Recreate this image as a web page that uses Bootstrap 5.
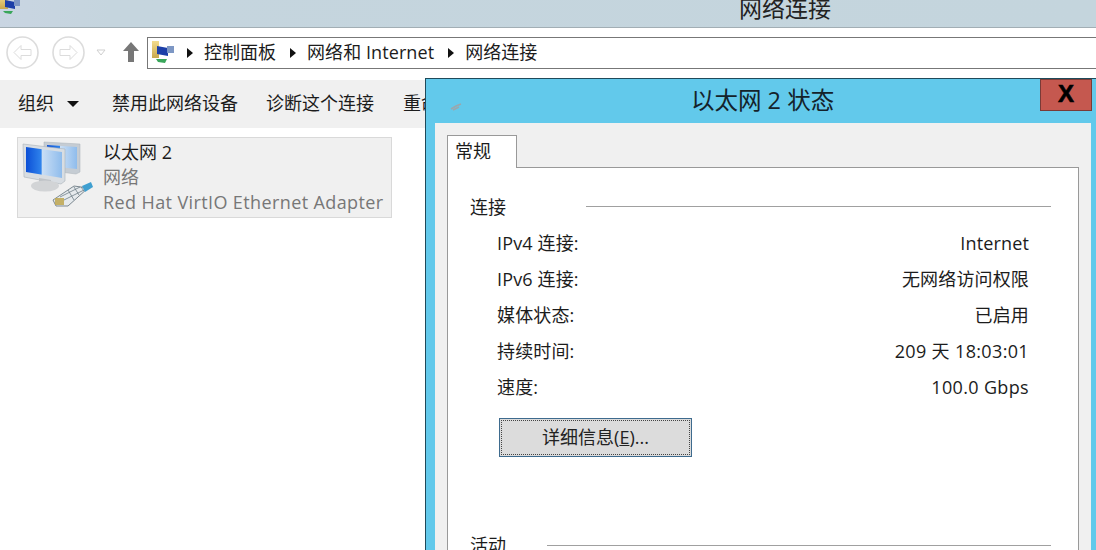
<!DOCTYPE html>
<html lang="zh-CN">
<head>
<meta charset="utf-8">
<title>网络连接</title>
<link href="https://cdn.jsdelivr.net/npm/bootstrap@5.3.0/dist/css/bootstrap.min.css" rel="stylesheet">
<style>
html,body{height:550px;overflow:hidden;background:#fff}
body{font-family:"Open Sans","Noto Sans CJK SC",sans-serif;font-size:18px;line-height:24px;color:#1c1c1c;width:1096px;position:relative}
.title-strip{height:28px;background:linear-gradient(90deg,#c9d5e2 0,#c5d5de 110px,#c4d5dd 100%);border-bottom:1px solid #a2aeb4;overflow:hidden}
.title-strip .app-ico{width:22px;height:22px;margin-top:-6px;flex:none}
.title-text{font-size:23px;line-height:17px;margin-left:717px;color:#222}
.addr-row{height:52px;padding:0 0 4px 6px}
.round-btn{width:33px;height:33px;flex:none}
.fwd-btn{margin-left:13px}
.hist-caret{margin-left:11px;flex:none}
.up-arrow{margin-left:16px;flex:none}
.addr-box{height:32px;flex:1;border:1px solid #777;border-right:0;margin-left:7px;padding:0 0 1px 3px;margin-top:1px;white-space:nowrap}
.crumb-sep{width:0;height:0;border-left:6px solid #111;border-top:5px solid transparent;border-bottom:5px solid transparent;margin:2px 11px 0 14px;flex:none}
.crumb-first{margin-left:12px}
.crumb-wide{letter-spacing:.08px}
.cmd-bar{height:48px;background:#f0f0f0;padding:0 0 2px 18px;white-space:nowrap;overflow:hidden}
.cmd-caret{width:0;height:0;border-top:6px solid #111;border-left:6px solid transparent;border-right:6px solid transparent;margin:1px 0 0 13px}
.cmd-a{margin-left:33px}
.cmd-b{margin-left:28px}
.cmd-c{margin-left:29px}
.adapter-tile{width:375px;height:81px;margin:9px 0 0 17px;background:#f0f0f0;border:1px solid #d9d9d9;padding:2px 0 0 85px;position:relative}
.adapter-tile .tile-ico{position:absolute;left:4px;top:2px;width:72px;height:72px}
.adapter-tile .ln{height:25px;line-height:25px;white-space:nowrap}
.muted-ln{color:#777}
.wide-ln{letter-spacing:.39px}
.dlg{position:absolute;left:425px;top:78px;width:680px;height:480px;background:#62c9eb;border:1px solid #1f4a5a;border-right:0;border-bottom:0}
.dlg-head{height:44px;position:relative}
.dlg-title{font-size:23.5px;line-height:42px;padding-left:265px;color:#14222a;white-space:nowrap}
.dlg-small{position:absolute;left:24px;top:24px;width:12px;height:8px}
.close-x{position:absolute;left:614px;top:0;width:52px;height:32px;background:#c5584f;border:1px solid #7a3a36;color:#000;font:700 24px/28px "Liberation Sans",sans-serif;text-align:center;-webkit-text-stroke:.6px #000}
.dlg-body{margin-left:9px;background:#f0f0f0;width:656px;height:440px;padding:12px 0 0 12px}
.tab-head{width:70px;height:33px;background:#fff;border:1px solid #999;border-bottom:0;padding:3px 0 0 7px;position:relative;z-index:1;margin-bottom:-1px}
.tab-pane-box{width:632px;height:400px;background:#fff;border:1px solid #999;padding:27px 27px 0 22px}
.grp-head{height:24px}
.grp-line{flex:1;height:1px;background:#a0a0a0;margin-left:41px}
.grp-line.wide{margin-left:80px;margin-top:-1px}
.info-list{padding:12px 22px 0 27px}
.info-row{height:36px;line-height:24px;white-space:nowrap;letter-spacing:.15px}
.val-wide{letter-spacing:.35px}
.detail-btn{width:193px;height:39px;margin:7px 0 0 2px;background:#dcdcdc;border:1px solid #3e6b8e;outline:1px dotted #444;outline-offset:-3px;border-radius:0;padding:0;font-size:18px;color:#222;display:block}
.gap-block{height:76px}
</style>
</head>
<body>
<svg width="0" height="0" class="position-absolute">
  <defs>
    <linearGradient id="scr" x1="0" y1="0" x2="1" y2="0"><stop offset="0" stop-color="#0c4fd6"/><stop offset=".42" stop-color="#2f83ec"/><stop offset=".45" stop-color="#c9def5"/><stop offset="1" stop-color="#8fbcec"/></linearGradient>
    <linearGradient id="fold" x1="0" y1="0" x2="0" y2="1"><stop offset="0" stop-color="#f3dc8e"/><stop offset="1" stop-color="#c9a84e"/></linearGradient>
  </defs>
</svg>
<div class="title-strip d-flex">
  <svg class="app-ico" viewBox="0 0 22 22"><rect x="0" y="1" width="8" height="14" fill="url(#fold)"/><path d="M5 6 L15 8 V15 L5 13 Z" fill="#1c3fa8"/><rect x="14" y="6" width="6" height="6" fill="#7d97c4"/><path d="M3 17 L13 17 L11 20 L5 19 Z" fill="#39a65a"/></svg>
  <div class="title-text flex-grow-1">网络连接</div>
</div>
<div class="addr-row d-flex align-items-center">
  <svg class="round-btn" viewBox="0 0 33 33" fill="none" stroke="#dcdcdc"><circle cx="16.500" cy="16.500" r="15.500" stroke-width="1.600"/><path d="M8 16.500 L15 9.500 V13.500 H25 V19.500 H15 V23.500 Z" stroke-width="1"/></svg>
  <svg class="round-btn fwd-btn" viewBox="0 0 33 33" fill="none" stroke="#dcdcdc"><circle cx="16.500" cy="16.500" r="15.500" stroke-width="1.600"/><path d="M25 16.500 L18 9.500 V13.500 H8 V19.500 H18 V23.500 Z" stroke-width="1"/></svg>
  <svg width="10" height="7" class="hist-caret" viewBox="0 0 10 7" fill="none" stroke="#cfcfcf"><path d="M1 1 H9 L5 6 Z"/></svg>
  <svg width="18" height="22" class="up-arrow" viewBox="0 0 18 22"><path d="M9 1 L17 10 H12 V21 H6 V10 H1 Z" fill="#777"/></svg>
  <div class="addr-box d-flex align-items-center">
    <svg width="24" height="25" viewBox="0 0 24 25"><rect x="1" y="1" width="7" height="17" fill="url(#fold)"/><path d="M6 6 L17 8 V16 L6 14 Z" fill="#1c3fa8"/><rect x="16" y="6" width="7" height="7" fill="#7d97c4"/><path d="M5 19 L16 19 L14 23 L7 22 Z" fill="#39a65a"/></svg>
    <span class="crumb-sep crumb-first"></span><span>控制面板</span>
    <span class="crumb-sep"></span><span class="crumb-wide">网络和 Internet</span>
    <span class="crumb-sep"></span><span>网络连接</span>
  </div>
</div>
<div class="cmd-bar d-flex align-items-center">
  <span>组织</span><span class="cmd-caret"></span>
  <span class="cmd-a">禁用此网络设备</span>
  <span class="cmd-b">诊断这个连接</span>
  <span class="cmd-c">重命名此连接</span>
</div>
<div class="adapter-tile">
  <svg class="tile-ico" viewBox="0 0 72 72">
    <path d="M22 2 L58 4 V32 L54 34 L22 30 Z" fill="#c5ccd3" stroke="#aab2b9" stroke-width=".5"/><path d="M25 5 L55 7 V29 L25 26 Z" fill="url(#scr)"/>
    <path d="M1 4 L43 9 V41 L39 44 L2 37 Z" fill="#d8dde2" stroke="#a9b1b8" stroke-width=".6"/><path d="M4 7 L40 12 V38 L4 32 Z" fill="url(#scr)"/>
    <path d="M17 38 L29 40 V46 L17 44 Z" fill="#bfc3c7"/><ellipse cx="23" cy="46" rx="14" ry="5.500" fill="#d2d4d6"/>
    <path d="M31 60 L52 46 L66 48 L46 66 L34 66 Z" fill="#e6eaed" stroke="#6f7d86" stroke-width=".9"/>
    <path d="M38 57 L58 47 M42 60 L62 50 M46 50 L52 60 M52 47 L57 55 M59 47 L62 51" stroke="#6f7d86" stroke-width=".8" fill="none"/>
    <path d="M60 46 L69 42 L71 47 L63 52 Z" fill="#3f9fd0"/><rect x="33" y="58" width="9" height="7" fill="#bda64f" opacity=".85"/>
  </svg>
  <div class="ln">以太网 2</div>
  <div class="ln muted-ln">网络</div>
  <div class="ln muted-ln wide-ln">Red Hat VirtIO Ethernet Adapter</div>
</div>

<div class="dlg">
  <div class="dlg-head">
    <svg class="dlg-small" viewBox="0 0 12 8"><path d="M1 6 L6 3 L11 1 M3 7 L9 4" stroke="#9aa7ad" stroke-width="1.500" fill="none"/></svg>
    <div class="dlg-title">以太网 2 状态</div>
    <div class="close-x">X</div>
  </div>
  <div class="dlg-body">
    <div class="tab-head">常规</div>
    <div class="tab-pane-box">
      <div class="grp-head d-flex align-items-center"><span>连接</span><span class="grp-line wide"></span></div>
      <div class="info-list">
        <div class="info-row d-flex justify-content-between"><span>IPv4 连接:</span><span>Internet</span></div>
        <div class="info-row d-flex justify-content-between"><span>IPv6 连接:</span><span>无网络访问权限</span></div>
        <div class="info-row d-flex justify-content-between"><span>媒体状态:</span><span>已启用</span></div>
        <div class="info-row d-flex justify-content-between"><span>持续时间:</span><span class="val-wide">209 天 18:03:01</span></div>
        <div class="info-row d-flex justify-content-between"><span>速度:</span><span class="val-wide">100.0 Gbps</span></div>
        <button type="button" class="btn detail-btn">详细信息(<u>E</u>)...</button>
      </div>
      <div class="gap-block"></div>
      <div class="grp-head d-flex align-items-center"><span>活动</span><span class="grp-line"></span></div>
    </div>
  </div>
</div>
<script src="https://cdn.jsdelivr.net/npm/bootstrap@5.3.0/dist/js/bootstrap.bundle.min.js"></script>
</body>
</html>
